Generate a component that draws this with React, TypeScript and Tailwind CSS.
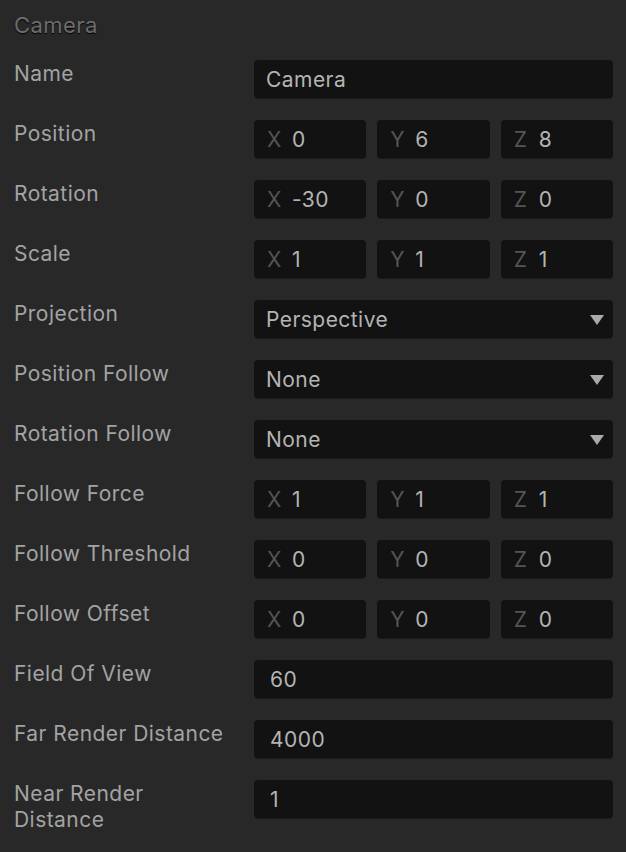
import React from 'react';

type Row =
  | { label: string; kind: 'text'; value: string; pad?: 'wide' }
  | { label: string; kind: 'vec'; x: string; y: string; z: string }
  | { label: string; kind: 'select'; value: string };

const rows: Row[] = [
  { label: 'Name', kind: 'text', value: 'Camera' },
  { label: 'Position', kind: 'vec', x: '0', y: '6', z: '8' },
  { label: 'Rotation', kind: 'vec', x: '-30', y: '0', z: '0' },
  { label: 'Scale', kind: 'vec', x: '1', y: '1', z: '1' },
  { label: 'Projection', kind: 'select', value: 'Perspective' },
  { label: 'Position Follow', kind: 'select', value: 'None' },
  { label: 'Rotation Follow', kind: 'select', value: 'None' },
  { label: 'Follow Force', kind: 'vec', x: '1', y: '1', z: '1' },
  { label: 'Follow Threshold', kind: 'vec', x: '0', y: '0', z: '0' },
  { label: 'Follow Offset', kind: 'vec', x: '0', y: '0', z: '0' },
  { label: 'Field Of View', kind: 'text', value: '60', pad: 'wide' },
  { label: 'Far Render Distance', kind: 'text', value: '4000', pad: 'wide' },
  { label: 'Near Render Distance', kind: 'text', value: '1', pad: 'wide' },
];

const box = 'h-[38px] pt-[2px] rounded-[4px] bg-[#121212] shadow-[0_1px_0_rgba(0,0,0,0.35)] flex items-center';

function Axis({ axis, value }: { axis: string; value: string }) {
  return (
    <div className={`${box} flex-1 pl-[13px]`}>
      <span className="text-[#555555] w-[25px]">{axis}</span>
      <span className="text-[#b4b4b4]">{value}</span>
    </div>
  );
}

function Field({ row }: { row: Row }) {
  if (row.kind === 'vec') {
    return (
      <div className="flex gap-[11px]">
        <Axis axis="X" value={row.x} />
        <Axis axis="Y" value={row.y} />
        <Axis axis="Z" value={row.z} />
      </div>
    );
  }
  if (row.kind === 'select') {
    return (
      <div className={`${box} justify-between pl-[12px] pr-[9px] text-[#b4b4b4]`}>
        <span>{row.value}</span>
        <svg width="14" height="10" viewBox="0 0 14 10">
          <path d="M0 0 H14 L7 10 Z" fill="#aaaaaa" />
        </svg>
      </div>
    );
  }
  return (
    <div className={`${box} ${row.pad === 'wide' ? 'pl-[16px]' : 'pl-[12px]'} text-[#b4b4b4]`}>
      {row.value}
    </div>
  );
}

export default function App() {
  return (
    <div
      className="w-[626px] h-[852px] bg-[#282828] px-[14px] pt-[11px] text-[21px] tracking-[0.45px]"
      style={{ fontFamily: 'Inter, "Noto Sans", sans-serif' }}
    >
      <div className="text-[22px] leading-[28px] text-[#6c6c6c] [text-shadow:0_1px_1px_#000]">Camera</div>
      <div className="flex flex-col gap-[22px] mt-[21px]">
        {rows.map((row) => (
          <div key={row.label} className="flex">
            <div className="w-[218px] shrink-0 pt-[1px] leading-[26px] text-[#a3a3a3]">{row.label}</div>
            <div className="flex-1 ml-[22px] mr-[-1px]">
              <Field row={row} />
            </div>
          </div>
        ))}
      </div>
    </div>
  );
}
